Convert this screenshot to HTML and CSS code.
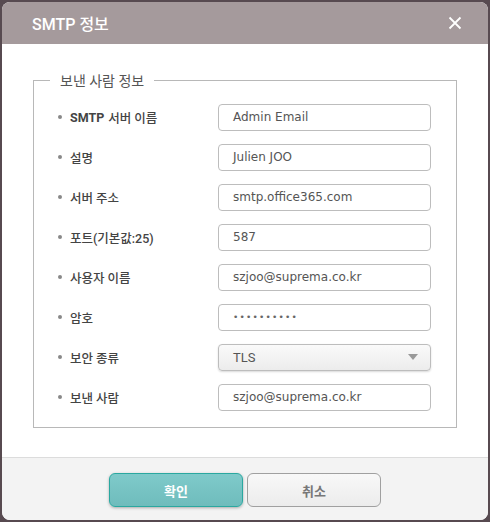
FILE: index.html
```html
<!DOCTYPE html>
<html lang="ko">
<head>
    <meta charset="UTF-8">
    <title>SMTP 정보</title>
    <link rel="stylesheet" href="styles.css">
</head>
<body>
    <div class="dialog">
        <div class="dialog-header">
            <span class="dialog-title">SMTP 정보</span>
            <span class="close-btn">
                <svg width="14" height="14" viewBox="0 0 14 14">
                    <path d="M1.5 1.5 L12.5 12.5 M12.5 1.5 L1.5 12.5" stroke="#fff" stroke-width="1.8" fill="none"/>
                </svg>
            </span>
        </div>
        <div class="dialog-body">
            <fieldset class="sender-box">
                <legend>보낸 사람 정보</legend>
                <div class="form-row">
                    <label><b>SMTP</b> 서버 이름</label>
                    <div class="field">Admin Email</div>
                </div>
                <div class="form-row">
                    <label>설명</label>
                    <div class="field">Julien JOO</div>
                </div>
                <div class="form-row">
                    <label>서버 주소</label>
                    <div class="field">smtp.office365.com</div>
                </div>
                <div class="form-row">
                    <label>포트(기본값:25)</label>
                    <div class="field">587</div>
                </div>
                <div class="form-row">
                    <label>사용자 이름</label>
                    <div class="field">szjoo@suprema.co.kr</div>
                </div>
                <div class="form-row">
                    <label>암호</label>
                    <div class="field password">••••••••••</div>
                </div>
                <div class="form-row">
                    <label>보안 종류</label>
                    <div class="field select">TLS<span class="caret"></span></div>
                </div>
                <div class="form-row">
                    <label>보낸 사람</label>
                    <div class="field">szjoo@suprema.co.kr</div>
                </div>
            </fieldset>
        </div>
        <div class="dialog-footer">
            <button class="btn btn-ok">확인</button>
            <button class="btn btn-cancel">취소</button>
        </div>
    </div>
</body>
</html>
```

FILE: styles.css
```css
* {
    box-sizing: border-box;
    margin: 0;
    padding: 0;
}
html, body {
    height: 100%;
}
body {
    background-color: #574a50;
    padding: 2px;
    font-family: Roboto, "Noto Sans CJK KR", sans-serif;
}
.dialog {
    height: 518px;
    background-color: #fff;
    border-radius: 8px;
    overflow: hidden;
    display: flex;
    flex-direction: column;
}
.dialog-header {
    height: 42px;
    background-color: #a59a9c;
    display: flex;
    align-items: center;
    justify-content: space-between;
    padding: 0 26px 0 30px;
}
.dialog-title {
    color: #fff;
    font-size: 16px;
    font-weight: 500;
}
.close-btn {
    display: flex;
}
.dialog-body {
    flex: 1;
    padding: 26px 31px 0 31px;
}
.sender-box {
    border: 1px solid #b8b8b8;
    padding: 7px 24px 10px 24px;
}
.sender-box legend {
    margin-left: -8px;
    padding: 0 10px;
    font-size: 14px;
    color: #555;
}
.form-row {
    display: flex;
    align-items: center;
    height: 40px;
}
.form-row label {
    width: 160px;
    font-size: 12.5px;
    font-weight: 500;
    color: #444;
    display: flex;
    align-items: center;
}
.form-row label::before {
    content: '';
    width: 4px;
    height: 4px;
    border-radius: 50%;
    background-color: #888;
    margin-right: 8px;
}
.form-row label b {
    font-weight: 700;
    margin-right: 4px;
}
.field {
    width: 213px;
    height: 27px;
    border: 1px solid #bdbdbd;
    border-radius: 4px;
    padding: 0 14px;
    display: flex;
    align-items: center;
    font-family: "DejaVu Sans", sans-serif;
    font-size: 12px;
    color: #555;
}
.field.password {
    font-size: 9px;
    letter-spacing: 1.2px;
    color: #666;
}
.field.select {
    justify-content: space-between;
    background: linear-gradient(#fafafa, #ececec);
    font-family: Roboto, sans-serif;
    font-size: 13px;
    box-shadow: 0 1px 2px rgba(0,0,0,0.15);
}
.caret {
    width: 0;
    height: 0;
    border-left: 5px solid transparent;
    border-right: 5px solid transparent;
    border-top: 6px solid #999;
    margin-right: -2px;
}
.dialog-footer {
    height: 63px;
    background-color: #f3f3f3;
    border-top: 1px solid #dcdcdc;
    display: flex;
    justify-content: center;
    align-items: flex-start;
    gap: 4px;
    padding-top: 15px;
}
.btn {
    width: 134px;
    height: 34px;
    border-radius: 6px;
    font-family: Roboto, "Noto Sans CJK KR", sans-serif;
    font-size: 13px;
    font-weight: 700;
    cursor: pointer;
}
.btn-ok {
    background: linear-gradient(#7fcaca, #6fbcbc);
    border: 1px solid #2aa8a0;
    color: #fff;
    box-shadow: 0 1px 3px rgba(0,0,0,0.3);
}
.btn-cancel {
    background: linear-gradient(#f8f8f8, #ececec);
    border: 1px solid #a0a0a0;
    color: #777;
}
```
